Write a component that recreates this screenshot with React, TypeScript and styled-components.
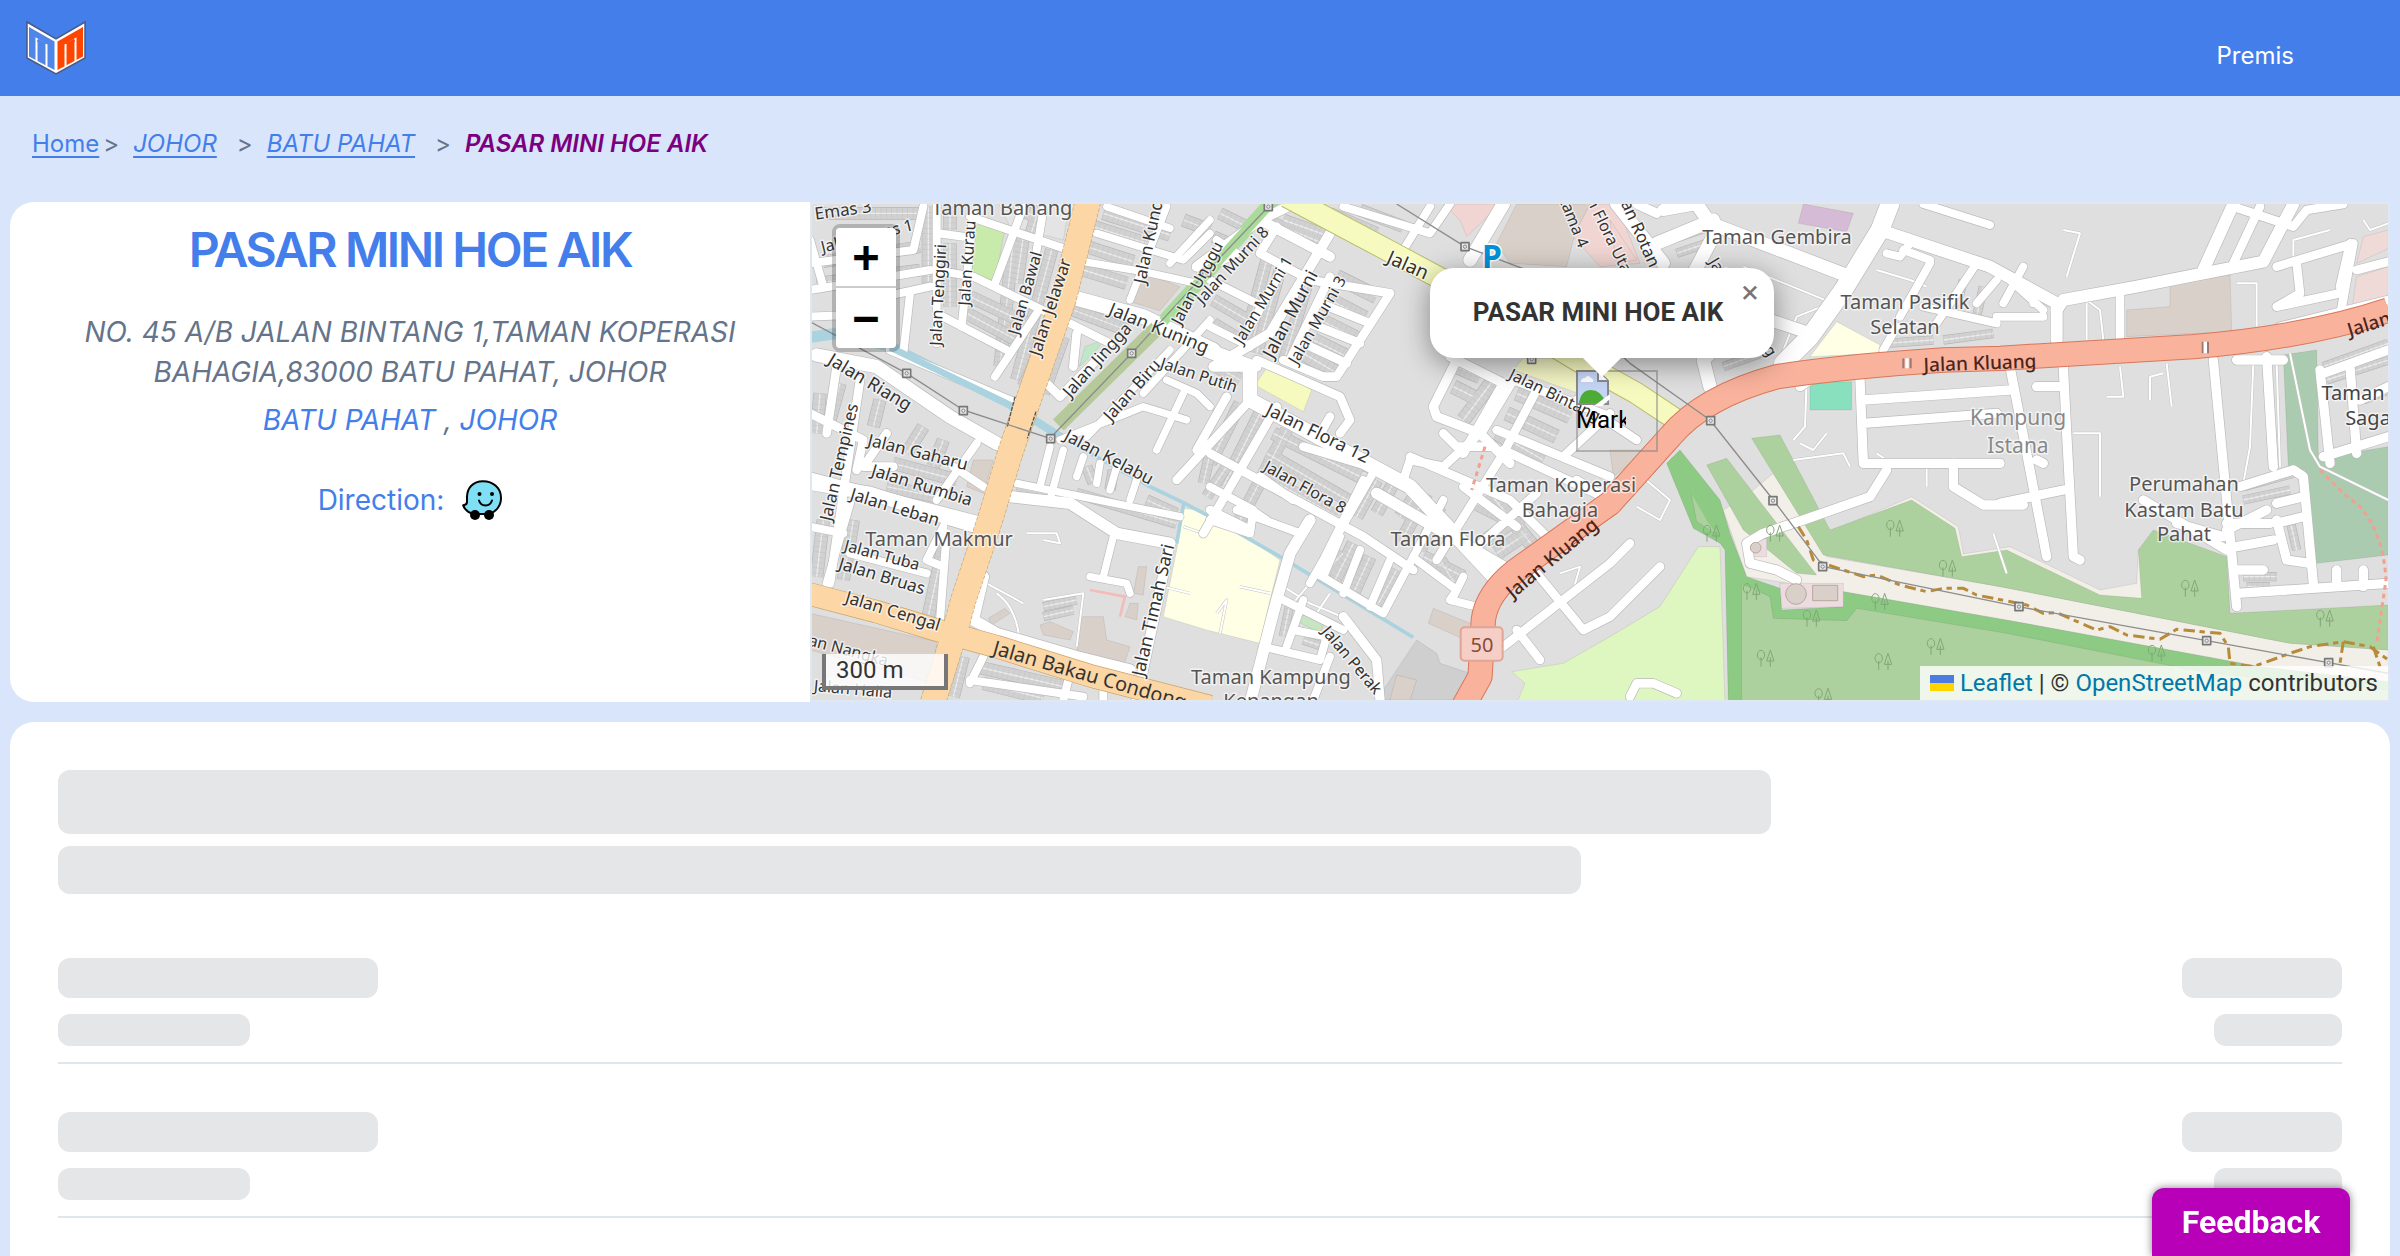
import React from 'react';
import styled, { createGlobalStyle } from 'styled-components';

const GlobalStyle = createGlobalStyle`
  * { box-sizing: border-box; }
  body { margin: 0; background: #d9e5fb; font-family: Inter, 'Liberation Sans', sans-serif; }
`;

const BLUE = '#437eeb';
const SLATE = '#64748b';

const Page = styled.div`
  display: flex;
  flex-direction: column;
  min-height: 100vh;
`;

const Header = styled.header`
  display: flex;
  justify-content: space-between;
  align-items: center;
  height: 96px;
  padding: 0 106px 0 24px;
  background: ${BLUE};
`;

const NavLink = styled.a`
  padding-top: 16px;
  color: #fff;
  font-size: 24px;
  line-height: 32px;
  text-decoration: none;
`;

const Breadcrumb = styled.nav`
  display: flex;
  align-items: center;
  height: 106px;
  padding: 0 32px 10px;
  color: ${SLATE};
  font-size: 24px;
  line-height: 32px;
`;

const Crumb = styled.a<{ $italic?: boolean }>`
  color: ${BLUE};
  font-style: ${(p) => (p.$italic ? 'italic' : 'normal')};
  text-underline-offset: 4px;
`;

const Separator = styled.span<{ $first?: boolean }>`
  margin: 0 14px 0 ${(p) => (p.$first ? 4 : 20)}px;
`;

const CurrentCrumb = styled.em`
  color: #7b0080;
  font-weight: 600;
`;

const Overview = styled.section`
  display: grid;
  grid-template-columns: 800px 1fr;
  height: 500px;
  margin: 0 10px 20px;
`;

const Info = styled.div`
  display: flex;
  flex-direction: column;
  align-items: center;
  padding: 16px 64px;
  border-radius: 24px 0 0 24px;
  background: #fff;
  text-align: center;
`;

const Title = styled.h1`
  margin: 0 0 30px;
  color: ${BLUE};
  font-size: 48px;
  font-weight: 600;
  line-height: 64px;
  letter-spacing: -0.05em;
`;

const Address = styled.address`
  color: ${SLATE};
  font-size: 28px;
  font-style: italic;
  line-height: 40px;
`;

const Region = styled(Address)`
  margin: 8px 0 36px;
  a { color: ${BLUE}; text-decoration: none; }
`;

const Direction = styled.div`
  display: flex;
  align-items: center;
  gap: 18px;
  color: ${BLUE};
  font-size: 28px;
  line-height: 48px;
  a { display: flex; }
`;

const MapFrame = styled.div`
  position: relative;
  overflow: hidden;
  border: 2px solid #dfe7f1;
  font-family: Roboto, 'Liberation Sans', sans-serif;
`;

const MapSvg = styled.svg`
  display: block;
  width: 100%;
  height: 100%;
  background: #e0dfdf;
`;

const ZoomControl = styled.div`
  position: absolute;
  top: 20px;
  left: 20px;
  display: flex;
  flex-direction: column;
  border: 4px solid rgba(0, 0, 0, 0.2);
  border-radius: 8px;
  background-clip: padding-box;
`;

const ZoomButton = styled.button`
  width: 60px;
  height: 60px;
  padding: 0;
  border: 0;
  background: #fff;
  color: #000;
  font: bold 44px/56px 'DejaVu Sans Mono', monospace;
  &:first-child { border-bottom: 2px solid #ccc; border-radius: 4px 4px 0 0; }
  &:last-child { border-radius: 0 0 4px 4px; }
`;

const Popup = styled.div`
  position: absolute;
  top: 64px;
  left: 618px;
  width: 344px;
  height: 90px;
  padding-right: 8px;
  border-radius: 24px;
  background: #fff;
  color: #333;
  font-size: 26px;
  font-weight: 700;
  line-height: 88px;
  text-align: center;
  box-shadow: 0 6px 28px rgba(0, 0, 0, 0.4);
  &::after {
    content: '';
    position: absolute;
    top: 89px;
    left: 152px;
    border: 20px solid transparent;
    border-top-color: #fff;
    border-bottom: 0;
  }
`;

const CloseButton = styled.button`
  position: absolute;
  top: 0;
  right: 0;
  width: 48px;
  height: 48px;
  padding: 0;
  border: 0;
  background: none;
  color: #757575;
  font: 32px/46px Roboto, sans-serif;
`;

const MarkerShadow = styled.div`
  position: absolute;
  top: 166px;
  left: 764px;
  width: 82px;
  height: 82px;
  border: 2px solid rgba(130, 130, 130, 0.5);
`;

const Marker = styled.div`
  position: absolute;
  top: 166px;
  left: 764px;
  width: 50px;
  height: 82px;
  overflow: hidden;
  color: #000;
  font-size: 24px;
  line-height: 28px;
  svg { display: block; }
`;

const Scale = styled.div`
  position: absolute;
  bottom: 10px;
  left: 10px;
  width: 126px;
  height: 36px;
  padding-left: 10px;
  border: 4px solid #777;
  border-top: 0;
  background: rgba(255, 255, 255, 0.8);
  color: #333;
  font-size: 24px;
  line-height: 32px;
`;

const Attribution = styled.div`
  position: absolute;
  right: 0;
  bottom: 0;
  display: flex;
  align-items: center;
  gap: 6px;
  height: 34px;
  padding: 0 10px;
  background: rgba(255, 255, 255, 0.8);
  color: #333;
  font-size: 24px;
  line-height: 34px;
  a { color: #0078a8; text-decoration: none; }
`;

const Prices = styled.section`
  flex: 1;
  margin: 0 10px;
  padding: 48px 48px 38px;
  border-radius: 24px 24px 0 0;
  background: #fff;
`;

const Bone = styled.div<{ $w: string; $h: number; $gap?: number }>`
  width: ${(p) => p.$w};
  height: ${(p) => p.$h}px;
  margin-bottom: ${(p) => p.$gap ?? 0}px;
  border-radius: 12px;
  background: #e5e6e8;
`;

const SkeletonRow = styled.div`
  display: flex;
  justify-content: space-between;
  padding: 48px 0 16px;
  border-bottom: 2px solid #dfe7ee;
`;

const SkeletonColumn = styled.div<{ $end?: boolean }>`
  display: flex;
  flex-direction: column;
  align-items: ${(p) => (p.$end ? 'flex-end' : 'flex-start')};
  gap: 16px;
`;

const Feedback = styled.button`
  position: fixed;
  right: 50px;
  bottom: 0;
  width: 198px;
  height: 68px;
  padding: 0;
  border: 0;
  border-radius: 12px 12px 0 0;
  background: #b700b7;
  color: #fff;
  font: 700 32px/64px Roboto, 'Liberation Sans', sans-serif;
  box-shadow: 0 0 8px rgba(0, 0, 0, 0.5);
`;

/* ---- Map geometry, three units to the pixel ---- */

type Area = [fill: string, points: string];
const areas: Area[] = [
  ['#c8ebab', '495,65 585,85 555,245 485,215'],
  ['#c0e8c8', '808,500 825,440 882,420 850,460'],
  ['#d9d0c9', '990,215 1110,260 1050,332 960,305'],
  ['#e4e4e4', '560,0 780,0 760,120 600,80'],
  ['#f2efe9', '2830,870 2890,820 3050,1070 3600,1165 4440,1330 4735,1350 4735,1445 4350,1400 3600,1262 3100,1175 2810,1130 2740,930'],
  ['#f2efe9', '3050,1000 3305,890 3445,980 3460,1062 3600,1040 3870,1170 3980,1150 3985,1050 4000,1050 4005,1205 3860,1195 3590,1065 3440,1085'],
  ['#8dca84', '2610,750 2730,900 2760,1000 2810,1130 2910,1165 2915,1230 3100,1220 3100,1175 3600,1262 4350,1400 4735,1445 4735,1510 2755,1510 2745,1050 2730,1030 2650,985 2570,790'],
  ['#add19e', '2640,860 2710,960 2715,1000 2660,965'],
  ['#add19e', '2795,1150 2880,1190 2890,1255 3110,1262 3140,1225 3590,1300 4200,1420 4735,1470 4735,1510 2795,1510'],
  ['#add19e', '2690,795 2750,775 3020,1125 2960,1120 2800,990'],
  ['#add19e', '2825,715 2910,705 3060,990 3305,900 3435,985 3455,1070 3590,1050 3870,1185 3995,1195 3985,1050 4030,990 4250,1070 4260,1240 4735,1215 4735,1350 4440,1330 3570,1160 3040,1065'],
  ['#aacbaf', '4420,465 4520,450 4525,775 4735,740 4735,1065 4520,1090 4485,810 4435,800'],
  ['#def6c0', '2665,1040 2730,1040 2745,1510 2120,1510 2145,1450 2105,1415 2260,1390 2400,1310 2550,1220'],
  ['#88e0be', '3000,548 3125,545 3125,630 3000,630'],
  ['#ffffe5', '1120,925 1200,935 1410,1080 1380,1200 1350,1330 1190,1290 1060,1250 1100,1050'],
  ['#ffffe5', '3080,365 3210,435 3205,460 3000,470'],
  ['#f7fabf', '1380,490 1505,570 1480,635 1335,555'],
  ['#f3f5c4', '2140,475 2290,475 2400,560 2360,600 2110,510'],
  ['#d9d0c9', '2120,12 2340,12 2290,120 2270,200 2100,190 2060,130'],
  ['#d9d0c9', '3950,330 4080,320 4080,255 4260,225 4265,395 3950,410'],
  ['#d9d0c9', '0,1240 380,1325 370,1450 0,1350'],
  ['#d9d0c9', '2560,440 2740,420 2640,470 2560,470'],
  ['#d9d0c9', '490,780 550,780 520,880 470,860'],
  ['#d9d0c9', '690,1275 720,1265 790,1295 780,1320 700,1305'],
  ['#d9d0c9', '815,1250 880,1250 890,1320 960,1340 940,1400 800,1360'],
  ['#d9d0c9', '985,1100 1010,1100 1000,1185 970,1180'],
  ['#d9d0c9', '960,1210 985,1210 980,1260 945,1250'],
  ['#d9d0c9', '535,1255 585,1225 600,1240 545,1275'],
  ['#d9d0c9', '1870,1225 1980,1270 1955,1315 1855,1270'],
  ['#cfcfcf', '1820,1320 1880,1360 1890,1390 1980,1420 1940,1500 1700,1500'],
  ['#d9d0c9', '1760,1425 1820,1440 1800,1500 1740,1500'],
  ['#d9d0c9', '2400,750 2510,750 2410,830'],
  ['#f0d5d2', '1900,12 2070,12 1970,110 1950,60'],
  ['#f0d5d2', '2340,12 2420,12 2490,190 2370,200 2290,110'],
  ['#f0d5d2', '2400,60 2480,180 2420,190'],
  ['#f0dad8', '4660,110 4735,90 4735,145 4640,190'],
  ['#f0dad8', '4640,230 4735,200 4735,290 4625,330'],
  ['#d6bbd6', '2980,12 3130,40 3110,95 2965,70'],
  ['#c5e6c0', '1480,1245 1540,1275 1530,1300 1465,1265'],
  ['#ecdce0', '2910,1150 3100,1150 3100,1220 2915,1225'],
  ['#ecdce0', '2815,1015 2870,1015 2870,1070 2820,1070'],
];

/* Terraced house rows: grey strips with a lane behind them. */
type Strip = [width: number, path: string];
const terraces: Strip[] = [
  [34, 'M20 40H330M20 250L330 210M40 185L330 140'],
  [36, 'M355 20V250M420 20V90M420 130V320M610 20L700 60M610 120L570 500M640 110L620 250M725 150L620 540M690 20L660 110'],
  [36, 'M880 40L1080 105M850 80L1010 130M830 140L970 185M820 210L950 250M1120 60L1200 90'],
  [36, 'M480 290L650 370M470 340L620 420M720 400L640 560M760 410L700 580M790 330L950 390'],
  [36, 'M30 580L20 700M90 550L60 660M210 600L190 680M340 680L290 760M400 720L370 800'],
  [36, 'M130 960L100 1140M250 790L440 840M230 860L380 890M40 960L20 1130M400 1040L350 1270M460 1370L430 1490M500 1400L760 1460M520 1450L700 1495'],
  [34, 'M1230 40L1330 90M1210 110L1280 140M1210 300L1330 370M1210 370L1310 430M1390 70L1540 130M1420 60L1560 110M1650 30L1780 80M1560 40L1700 100M1370 180L1300 440M1410 210L1340 460M1500 220L1420 490'],
  [42, 'M1580 230L1700 290M1560 300L1665 355M1530 360L1640 415M1510 420L1610 470M1480 460L1590 525'],
  [36, 'M1220 500L1290 540M1290 610L1200 790M1350 640L1240 860M1430 690L1290 960M1390 700L1650 830M1370 760L1630 910M1350 820L1580 950M1540 760L1680 800M1700 840L1640 950M1750 850L1700 940'],
  [36, 'M1850 880L1770 1030M1890 920L1830 1050M1600 1060L1550 1110M1630 1030L1570 1150M1680 1070L1630 1180M1760 1110L1700 1220M1820 880L1770 950M1890 1080L1940 1160M1840 1070L1960 1130'],
  [40, 'M1940 500L2010 530M1930 560L1990 590M2050 540L1960 660M2120 580L2280 650M2090 640L2240 710M2060 700L2200 780M1980 900L2140 980M2040 880L2170 1040M2030 1020L2110 960M2060 1060L2150 1000'],
  [30, 'M830 800L850 850M910 810L900 870M620 860L800 900M800 880L1100 970M1010 900L1100 940M1200 760L1180 850M1250 800L1190 890'],
  [24, 'M2580 120L2700 80M2600 160L2720 120M2740 500L2880 450M3230 430L3370 420M3400 420L3550 400M3460 240L3440 320M3520 260L3500 350'],
  [24, 'M4540 500L4735 430M4550 540L4735 480M4660 600L4735 570M4300 860L4450 820M4300 900L4440 870M4440 960L4460 1050M4300 1130H4400M4310 1160H4380'],
  [24, 'M1440 1210L1420 1310M1480 1320L1540 1340M700 1220L800 1200M700 1250L790 1230'],
];

const streets: Strip[] = [
  [24, 'M340 20L310 150L0 190M0 270L120 250L360 210M380 12V430M460 110L385 100M490 40L455 380M0 120L40 260'],
  [24, 'M480 50L760 145M640 20L555 250M700 30L680 150M400 215L490 230L780 370L900 430'],
  [24, 'M380 340L590 450M680 340L555 530M300 280L280 460M130 310L360 260M0 350L120 345L140 320'],
  [40, 'M20 465L200 500L420 650L560 730'],
  [26, 'M240 450L620 610M700 540L750 590L870 470M800 400L790 500'],
  [44, 'M780 290L1000 350L1210 450'],
  [22, 'M860 100L1120 180L1200 100M820 185L1000 215L1160 250M960 300L1070 20M890 20L1080 85M1080 190L1200 60'],
  [22, 'M1000 580L1200 360M750 720L1000 620L1130 660M1070 540L1160 580L1200 620M830 710L1080 450M1120 580L1040 750'],
  [26, 'M0 640L160 720L140 810M80 500L50 700M150 540L60 1150M230 700L160 800L250 800M0 830L500 960'],
  [40, 'M0 850L180 880L400 950L500 980'],
  [24, 'M500 730L380 900M430 800L520 860M120 910L50 1150M0 980L100 1000M400 980L350 1080L400 1100M410 1000L390 1260M120 1060L350 1120'],
  [34, 'M600 890L780 910L920 1000L1080 1030M520 1130L490 1260L560 1300L800 1370L960 1410'],
  [30, 'M1080 1030L980 1500'],
  [22, 'M720 740L690 860M760 750L720 900M820 770L800 830M870 790L860 850M920 800L900 870M980 840L960 900M620 850L1110 950M910 1010L880 1130M840 1130L950 1150L960 1180'],
  [24, 'M480 1450L520 1370M480 1440L820 1490M780 1420L760 1500M880 1460V1500'],
  [30, 'M1450 12L1350 60L1160 200M1350 60L1560 170M1560 100L1380 400L1210 500L1340 500'],
  [26, 'M1400 80L1350 160L1500 240L1740 280L1580 530L1540 530L1420 480M1320 380L1420 200M1440 480L1560 230M1530 310L1680 370M1500 370L1650 430M1480 430L1610 490'],
  [44, 'M1190 450L1320 500L1320 600L1800 860L2080 1160'],
  [24, 'M1600 20L1860 100L1920 12M1780 150L1860 20M1200 380L1320 440M1200 240L1340 310M1220 120L1280 160L1200 200'],
  [26, 'M1340 480L1590 590L1620 660L1590 700M1560 650L1520 720M1480 740L1680 800M1400 620L1180 1000M1330 590L1100 840M1250 590L1160 750M1200 760L1660 1010L1810 1110M1350 830L1450 900M1320 990L1200 930'],
  [24, 'M1700 800L1500 1150M1900 900L1720 1240L1520 1120L1660 840M1200 860L1330 930L1320 1000L1200 960M1280 930L1470 1000M1370 960L1340 940M1590 1010L1540 1130M1650 1050L1600 1180M1740 1080L1680 1220'],
  [34, 'M1500 960L1440 1060L1400 1200L1320 1510M1700 880L2080 1100'],
  [24, 'M1820 1080L1940 1170L1920 1200L2040 1230M1960 1130L1930 1190M1400 1190L1600 1290M1480 1200L1430 1340M1360 1340L1530 1380L1550 1310M1560 1370L1510 1500M1450 1290L1550 1310'],
  [28, 'M1600 1250L1700 1380L1710 1500M1960 440L1870 620L1880 650L2010 700L2100 790M1920 470L2080 550L1960 760'],
  [26, 'M1800 770L2100 900L2240 1040M2080 760L1880 1080M1780 840L1800 780L1900 800L2020 690L2110 540L2400 650M1900 700L1940 740L2040 740M2060 690L2400 830M1960 860L2120 980M2180 880L1980 1060M2080 750L2400 900L2300 840'],
  [26, 'M2400 640L2260 770M2180 570L2080 760M2300 600L2480 720'],
  [26, 'M2080 1340L2400 1090L2460 1030M2180 1120L2320 1290L2400 1250L2550 1100M2120 1290L2190 1380M2460 1490L2480 1450L2530 1450L2600 1480'],
  [40, 'M2080 12L1980 180M2420 12L2560 190M2660 12L2700 70L3120 230M2540 130L2710 60M2640 240L2720 90M2720 440L2680 480L2700 560'],
  [56, 'M3240 12L3210 90L3100 270L3000 410L2920 490'],
  [36, 'M3210 90L3540 200L3740 310L3740 420M2700 300L3000 400M2660 12L2560 30'],
  [24, 'M3340 12L3540 75M3360 180L3280 150M3300 130L3270 170L3230 160M3360 190L3270 350M3460 170L3500 190L3380 370M3560 240L3500 310M3340 320L3560 370M3260 380L3220 450M3560 350H3700M3640 200L3580 310M3600 240L3700 330M3670 270V310'],
  [36, 'M3740 330L3760 300L3980 260L4180 220L4360 185L4450 12M4180 210L4270 12'],
  [26, 'M4270 190L4350 20M4270 20L4450 80L4490 30L4600 12M4400 200L4630 130L4590 350M4460 190L4470 280L4400 320L4590 280M4590 260L4620 130M4410 380L4735 300M3930 290V420M4640 210L4735 185'],
  [28, 'M2970 560L3000 540M3150 540L3160 790L3570 790M3160 600L3600 570M3160 670L3560 640M3600 500L3710 1070M3760 500L3770 700L3790 1070L3810 1080M3680 560H3760M3570 910L3760 870M3680 780L3700 790'],
  [28, 'M3230 810L3180 890L2980 960L2860 1000L2810 1030L2820 1090L2900 1110L2960 1140M3430 790L3430 860L3520 915H3640'],
  [28, 'M4210 480L4250 900L4280 1220M4370 470L4390 800M4290 860L4450 810L4480 830L4510 1150M4000 900L4250 1050M4100 970L4240 1010M4250 970L4380 970M4280 1040L4390 1020M4250 990L4370 930M4400 910L4480 890M4400 970L4480 950M4400 960L4430 1080L4500 1090'],
  [28, 'M4280 1180L4735 1150M4280 1110H4360M4580 1160V1110M4660 1160V1110M4530 510L4560 790M4620 500L4640 760M4540 520L4735 450M4540 770L4735 710M4280 480H4420M4650 600L4735 560M2540 40L2480 12'],
];

const lanes = [
  'M650 1000H740L750 1030L700 1020M530 1150L640 1210M560 1180Q620 1220 630 1330M700 1200L820 1180L800 1340M1120 980L1180 1000M1060 1160L1140 1180M1290 1160L1380 1180M1220 1240L1250 1200L1230 1300',
  'M1420 1160L1500 1210L1620 1260M1500 1150L1440 1220M1560 1180L1520 1240M2460 800L2580 900L2550 960L2480 920M2250 1120L2310 1100L2290 1170',
  'M2900 500L2960 350L3060 310M2800 200L3070 310M3200 210L3300 240L3350 260M2990 540L2985 680L2950 720M2970 730L3010 750L3050 700M3770 230L3810 100L3760 90M3830 420V300L3870 330L3880 420M3930 500L3940 590H3890M4070 490L4085 620M4020 600V530L4060 520M3790 700H3870V890M4280 250H4340V380',
  'M4330 490L4320 740L4300 850M4400 490L4410 800M4440 460L4500 750L4530 800L4735 900M4450 200V120L4560 90M4735 70L4680 90L4660 60M2950 780L3100 760L3120 800M3350 780V860M3200 760L3260 800M3550 1000L3590 1120',
];

const rails = 'M0 365L290 520L460 630L720 715L965 460L1190 215L1375 20M1760 12L1965 140L2150 210L2460 490L2700 660L2890 900L3040 1100L3625 1220L4190 1322L4555 1388L4735 1420';
const pylons: [number, number][] = [
  [290, 520], [460, 632], [722, 716], [965, 460], [1190, 218], [1375, 20], [1965, 140], [2702, 662],
  [2889, 902], [3038, 1100], [3627, 1220], [4190, 1322], [4556, 1388], [2165, 478],
];
const trees: [number, number][] = [
  [3255, 985], [2825, 1175], [3005, 1255], [2867, 1375], [3220, 1385], [3377, 1340], [3413, 1105],
  [4140, 1165], [4545, 1255], [4040, 1360], [3210, 1205], [2895, 1000], [2705, 1000], [3040, 1490],
];

const KLUANG = 'M1960 1520L2010 1430L2020 1260Q2030 1180 2120 1110L2400 910L2580 710Q2680 590 2900 530Q3100 500 3400 480L3570 475L4150 440Q4500 410 4735 330';
const JELAWAR = 'M835 0L760 300L690 500L600 760L540 960L460 1200L430 1310L365 1520';
const BAKAU = 'M-10 1180L200 1235L380 1290L560 1340L850 1430L1200 1520';
const YELLOW = 'M1430 -10L1760 165L1900 240L2300 480L2480 580L2600 660';

const ON_RED = '#4a251c';

type Label = [x: number, y: number, angle: number, text: string, size?: number, color?: string];
const labels: Label[] = [
  [100, 30, -8, 'Emas 3', 17], [575, 24, 0, 'Taman Banang', 20, '#555'], [170, 108, -14, 'Jalan Emas 1'],
  [385, 285, -87, 'Jalan Tenggiri'], [472, 188, -86, 'Jalan Kurau'], [645, 280, -74, 'Jalan Bawal'],
  [720, 320, -72, 'Jalan Jelawar', 17], [1048, 385, 22, 'Jalan Kuning', 18], [1020, 100, -78, 'Jalan Kundur', 17],
  [862, 480, -48, 'Jalan Jingga', 17], [965, 570, -48, 'Jalan Biru', 17], [1168, 524, 18, 'Jalan Putih'],
  [180, 545, 31, 'Jalan Riang', 18], [88, 785, -77, 'Jalan Tempines', 17], [325, 757, 14, 'Jalan Gaharu', 17],
  [335, 855, 17, 'Jalan Rumbia', 17], [255, 920, 17, 'Jalan Leban', 17], [388, 1018, 0, 'Taman Makmur', 20, '#555'],
  [215, 1065, 15, 'Jalan Tuba'], [215, 1128, 17, 'Jalan Bruas', 17], [250, 1232, 17, 'Jalan Cengal', 17],
  [90, 1345, 15, 'Jalan Nangka'], [130, 1466, 5, 'Jalan Halia'], [840, 1425, 16, 'Jalan Bakau Condong', 20],
  [1030, 1230, -77, 'Jalan Timah Sari', 18], [898, 772, 28, 'Jalan Kelabu', 17], [1265, 195, -47, 'Jalan Murni 8'],
  [1160, 250, -62, 'Jalan Unggu'], [1360, 300, -59, 'Jalan Murni 1'], [1440, 342, -62, 'Jalan Murni', 18],
  [1522, 360, -60, 'Jalan Murni 3'], [1525, 698, 26, 'Jalan Flora 12', 18], [1485, 860, 29, 'Jalan Flora 8'],
  [1795, 195, 24, 'Jalan', 19], [2235, 585, 26, 'Jalan Bintang'], [2253, 855, 0, 'Taman Koperasi', 20, '#555'],
  [2250, 930, 0, 'Bahagia', 20, '#555'], [1915, 1018, 0, 'Taman Flora', 20, '#555'], [2225, 1075, -40, 'Jalan Kluang', 19, ON_RED],
  [1382, 1432, 0, 'Taman Kampung', 20, '#555'], [1382, 1502, 0, 'Kenangan', 20, '#555'], [1625, 1380, 50, 'Jalan Perak'],
  [2900, 110, 0, 'Taman Gembira', 20, '#555'], [3285, 305, 0, 'Taman Pasifik', 20, '#555'], [3285, 380, 0, 'Selatan', 20, '#555'],
  [3510, 490, -2, 'Jalan Kluang', 19, ON_RED], [3625, 655, 0, 'Kampung', 21, '#888'], [3625, 738, 0, 'Istana', 21, '#888'],
  [4122, 852, 0, 'Perumahan', 20, '#555'], [4122, 930, 0, 'Kastam Batu', 20, '#555'], [4122, 1003, 0, 'Pahat', 20, '#555'],
  [4630, 578, 0, 'Taman', 20, '#444'], [4675, 655, 0, 'Saga', 20, '#444'], [4676, 373, -17, 'Jalan', 19, ON_RED],
  [2490, 95, 66, 'Jalan Rotan B', 17], [2390, 90, 64, 'Jalan Flora Utara'], [2285, 50, 68, 'Utama 4'], [2800, 320, 58, 'Jalan Gemilang'],
];

const toX = (v: number) => Math.round((v - 6) / 3);
const toY = (v: number) => Math.round((v - 12) / 3);

function StreetMap() {
  return (
    <MapSvg viewBox="0 0 1576 496" preserveAspectRatio="xMidYMid slice" role="img" aria-label="Map of Batu Pahat">
      <defs>
        <g id="trees" fill="none" stroke="#7fa878" strokeWidth="3">
          <path d="M-14 25V-3M14 25V-3M14 -25L3 8H25Z" />
          <ellipse cx="-14" cy="-10" rx="11" ry="14" />
        </g>
      </defs>
      <g transform="scale(0.333333) translate(-6 -12)" fill="none" strokeLinejoin="round">
        {areas.map(([fill, points], i) => (
          <polygon key={i} points={points} fill={fill} stroke="#000" strokeOpacity="0.08" strokeWidth="3" />
        ))}
        <path d="M2590 770L2700 960L2750 1030L2780 1140L2895 1180L2900 1245H3110L3130 1200L3600 1290L4300 1420" stroke="#8dca84" strokeWidth="18" />
        {terraces.map(([w, d], i) => (
          <g key={i}>
            <path d={d} stroke="#b8b7b7" strokeWidth={w + 4} />
            <path d={d} stroke="#d2d1d1" strokeWidth={w} />
            <path d={d} stroke="#ececec" strokeWidth="4" />
            <path d={d} stroke="#c2c1c1" strokeWidth={w} strokeOpacity="0.6" strokeDasharray="2 14" />
          </g>
        ))}
        {lanes.map((d, i) => (
          <g key={i}>
            <path d={d} stroke="#c4c4c4" strokeWidth="9" />
            <path d={d} stroke="#fff" strokeWidth="6" />
          </g>
        ))}
        <path d="M0 412L80 400L250 440" stroke="#aad3df" strokeWidth="34" />
        <path d="M240 435L600 615L760 715" stroke="#aad3df" strokeWidth="24" />
        <path d="M760 715L1010 855L1120 908L1200 950L1410 1070L1810 1312M1122 905L1100 1030" stroke="#aad3df" strokeWidth="11" />
        <path d="M1050 375L1390 0" stroke="#aadb9b" strokeWidth="40" />
        <g strokeLinecap="round">
          {streets.map(([w, d], i) => <path key={i} d={d} stroke="#bcbbbb" strokeWidth={w + 4} />)}
          {streets.map(([w, d], i) => <path key={i} d={d} stroke="#fff" strokeWidth={w} />)}
        </g>
        <path d="M745 675L1040 385" stroke="#b5c99a" strokeWidth="46" />
        <path d="M1060 365L1390 0" stroke="#aadb9b" strokeWidth="30" />
        <path d="M240 442L600 615L700 675" stroke="#aad3df" strokeWidth="20" />
        <path d={YELLOW} stroke="#b9bd6c" strokeWidth="68" />
        <path d={YELLOW} stroke="#f7fabf" strokeWidth="62" />
        <path d={BAKAU} stroke="#c9a56b" strokeWidth="70" />
        <path d={JELAWAR} stroke="#c9a56b" strokeWidth="78" strokeDasharray="12 4" />
        <path d={BAKAU} stroke="#fcd6a4" strokeWidth="66" />
        <path d={JELAWAR} stroke="#fcd6a4" strokeWidth="74" />
        <path d="M615 590L592 680M678 635L652 715" stroke="#555" strokeWidth="4" strokeDasharray="12 4" />
        <path d={KLUANG} stroke="#d9775a" strokeWidth="76" />
        <path d={KLUANG} stroke="#f9b29c" strokeWidth="70" />
        <path d="M840 1170L945 1190L930 1250" stroke="#f3bcb8" strokeWidth="8" />
        <path d="M2025 740L1985 870M4530 810L4600 880L4650 920Q4720 1000 4728 1140L4700 1330" stroke="#f3a090" strokeWidth="9" strokeDasharray="14 12" />
        <path d="M2965 980L2990 1020L3010 1080L3100 1110L3160 1130L3200 1125L3270 1155L3350 1175L3400 1165L3460 1165L3500 1185L3650 1215L3700 1240L3740 1238L3860 1290L3900 1280L3950 1305L4050 1318L4100 1288L4230 1300L4255 1340L4260 1390L4330 1400L4440 1360L4500 1340L4600 1325L4680 1340L4735 1380M4600 1325L4590 1390M4690 1340L4710 1400" stroke="#b88b38" strokeWidth="9" strokeDasharray="34 14 16 16" />
        <path d={rails} stroke="#8d8d8d" strokeWidth="4" />
        {pylons.map(([x, y], i) => (
          <g key={i}>
            <rect x={x - 12} y={y - 12} width="24" height="24" fill="#e8e8e8" stroke="#777" strokeWidth="5" />
            <circle cx={x} cy={y} r="5" stroke="#888" strokeWidth="3" />
          </g>
        ))}
        {trees.map(([x, y], i) => <use key={i} href="#trees" x={x} y={y} />)}
        <g fill="#d9d0c9" stroke="#b8a89c" strokeWidth="3">
          <circle cx="2958" cy="1182" r="31" />
          <rect x="3008" y="1156" width="75" height="46" />
          <circle cx="2837" cy="1043" r="16" />
        </g>
        <path d="M3280 475V505M3302 475V505M4178 425V460M4194 425V460" stroke="#9c7a70" strokeWidth="6" />
        <path d="M3291 475V505M4186 425V460" stroke="#fff" strokeWidth="10" />
        <rect x="1952" y="1282" width="126" height="100" rx="12" fill="#f5cfc6" stroke="#e0a596" strokeWidth="6" />
      </g>
      <g fontFamily="'Noto Sans', sans-serif" textAnchor="middle" stroke="#fff" strokeWidth="3" paintOrder="stroke" strokeLinejoin="round">
        {labels.map(([x, y, angle, text, size = 16, color = '#333'], i) => (
          <text key={i} transform={`translate(${toX(x)} ${toY(y)}) rotate(${angle})`} dy="0.35em" fontSize={size}
            fill={color} fontWeight={color === ON_RED ? 500 : 400}
            strokeOpacity={color === ON_RED || text === 'Jalan Bakau Condong' ? 0 : 0.6}>
            {text}
          </text>
        ))}
        <text x={toX(2015)} y={toY(1335)} dy="0.35em" fontSize="20" fill="#8a4a3c" strokeOpacity="0">50</text>
        <text x={toX(2047)} y={toY(170)} dy="0.35em" fontSize="32" fontWeight="700" fill="#0092da">P</text>
      </g>
    </MapSvg>
  );
}

function Logo() {
  return (
    <svg width="64" height="56" viewBox="24 19 64 56" aria-label="Logo">
      <path d="M27 21L56 38L85 21V57L56 73L27 57Z" fill="#fff" stroke="#4a5a80" strokeWidth="1.5" />
      <path d="M29 26L54.500 40.500V69L29 55.500Z" fill="#4f86e8" />
      <path d="M57.500 40.500L83 26V55.500L57.500 69Z" fill="#ff4500" />
      <path d="M36.500 60V38L46.500 44V65M65.500 65V44L75.500 38V60" fill="none" stroke="#fff" strokeWidth="2" />
      <path d="M37.500 39L45.500 43.500" stroke="#4f86e8" strokeWidth="3" />
      <path d="M66.500 43.500L74.500 39" stroke="#ff4500" strokeWidth="3" />
    </svg>
  );
}

function WazeIcon() {
  return (
    <svg width="40" height="40" viewBox="0 0 40 40" aria-hidden="true">
      <path d="M21 1.200C11 1.200 5 8 5 17V22C5 24.500 3.500 25 1.200 25.300C2.500 29 6 32.500 11 34H27C34 32 39 26 39 18C39 8 31 1.200 21 1.200Z" fill="#7fdff5" stroke="#000" strokeWidth="2" strokeLinejoin="round" />
      <circle cx="13" cy="35" r="5" /><circle cx="27" cy="35" r="5" />
      <path d="M10 34H30" stroke="#000" strokeWidth="2" />
      <circle cx="17.500" cy="14" r="2" /><circle cx="30" cy="14" r="2" />
      <path d="M17 20.500C19 27 28 27 30 20.500" fill="none" stroke="#000" strokeWidth="2" strokeLinecap="round" />
    </svg>
  );
}

function BrokenImage() {
  return (
    <svg width="34" height="36" viewBox="0 0 34 36" aria-hidden="true">
      <path d="M1 1H22L32 11V34H1Z" fill="#c5d5f4" stroke="#8a8a8a" strokeWidth="2" />
      <path d="M22 1V11H32" fill="#fff" stroke="#8a8a8a" strokeWidth="2" />
      <path d="M5 12Q5 8 9 8Q12 4 15 8Q18 9 17 12Z" fill="#fff" />
      <path d="M3 33Q5 20 15 20Q25 20 30 33Z" fill="#4dac36" />
      <path d="M18 36L34 24V29L26 36Z" fill="#fff" />
    </svg>
  );
}

function PriceSkeleton() {
  return (
    <SkeletonRow>
      <SkeletonColumn><Bone $w="320px" $h={40} /><Bone $w="192px" $h={32} /></SkeletonColumn>
      <SkeletonColumn $end><Bone $w="160px" $h={40} /><Bone $w="128px" $h={32} /></SkeletonColumn>
    </SkeletonRow>
  );
}

export default function App() {
  return (
    <Page>
      <GlobalStyle />
      <Header>
        <Logo />
        <NavLink href="#premis">Premis</NavLink>
      </Header>
      <Breadcrumb aria-label="Breadcrumb">
        <Crumb href="#home">Home</Crumb><Separator $first>&gt;</Separator>
        <Crumb href="#johor" $italic>JOHOR</Crumb><Separator>&gt;</Separator>
        <Crumb href="#batu-pahat" $italic>BATU PAHAT</Crumb><Separator>&gt;</Separator>
        <CurrentCrumb>PASAR MINI HOE AIK</CurrentCrumb>
      </Breadcrumb>
      <Overview>
        <Info>
          <Title>PASAR MINI HOE AIK</Title>
          <Address>NO. 45 A/B JALAN BINTANG 1,TAMAN KOPERASI BAHAGIA,83000 BATU PAHAT, JOHOR</Address>
          <Region as="div"><a href="#batu-pahat">BATU PAHAT</a> , <a href="#johor">JOHOR</a></Region>
          <Direction>Direction: <a href="#waze" aria-label="Waze"><WazeIcon /></a></Direction>
        </Info>
        <MapFrame>
          <StreetMap />
          <MarkerShadow />
          <Marker><BrokenImage />Marker</Marker>
          <Popup>
            PASAR MINI HOE AIK
            <CloseButton aria-label="Close popup">×</CloseButton>
          </Popup>
          <ZoomControl>
            <ZoomButton aria-label="Zoom in">+</ZoomButton>
            <ZoomButton aria-label="Zoom out">−</ZoomButton>
          </ZoomControl>
          <Scale>300 m</Scale>
          <Attribution>
            <svg width="24" height="16" viewBox="0 0 24 16" aria-hidden="true">
              <path fill="#4c7be1" d="M0 0h24v8H0z" /><path fill="#ffd500" d="M0 8h24v8H0z" />
            </svg>
            <span><a href="#leaflet">Leaflet</a> | © <a href="#osm">OpenStreetMap</a> contributors</span>
          </Attribution>
        </MapFrame>
      </Overview>
      <Prices>
        <Bone $w="75%" $h={64} $gap={12} />
        <Bone $w="66.66%" $h={48} $gap={16} />
        <PriceSkeleton />
        <PriceSkeleton />
      </Prices>
      <Feedback>Feedback</Feedback>
    </Page>
  );
}
